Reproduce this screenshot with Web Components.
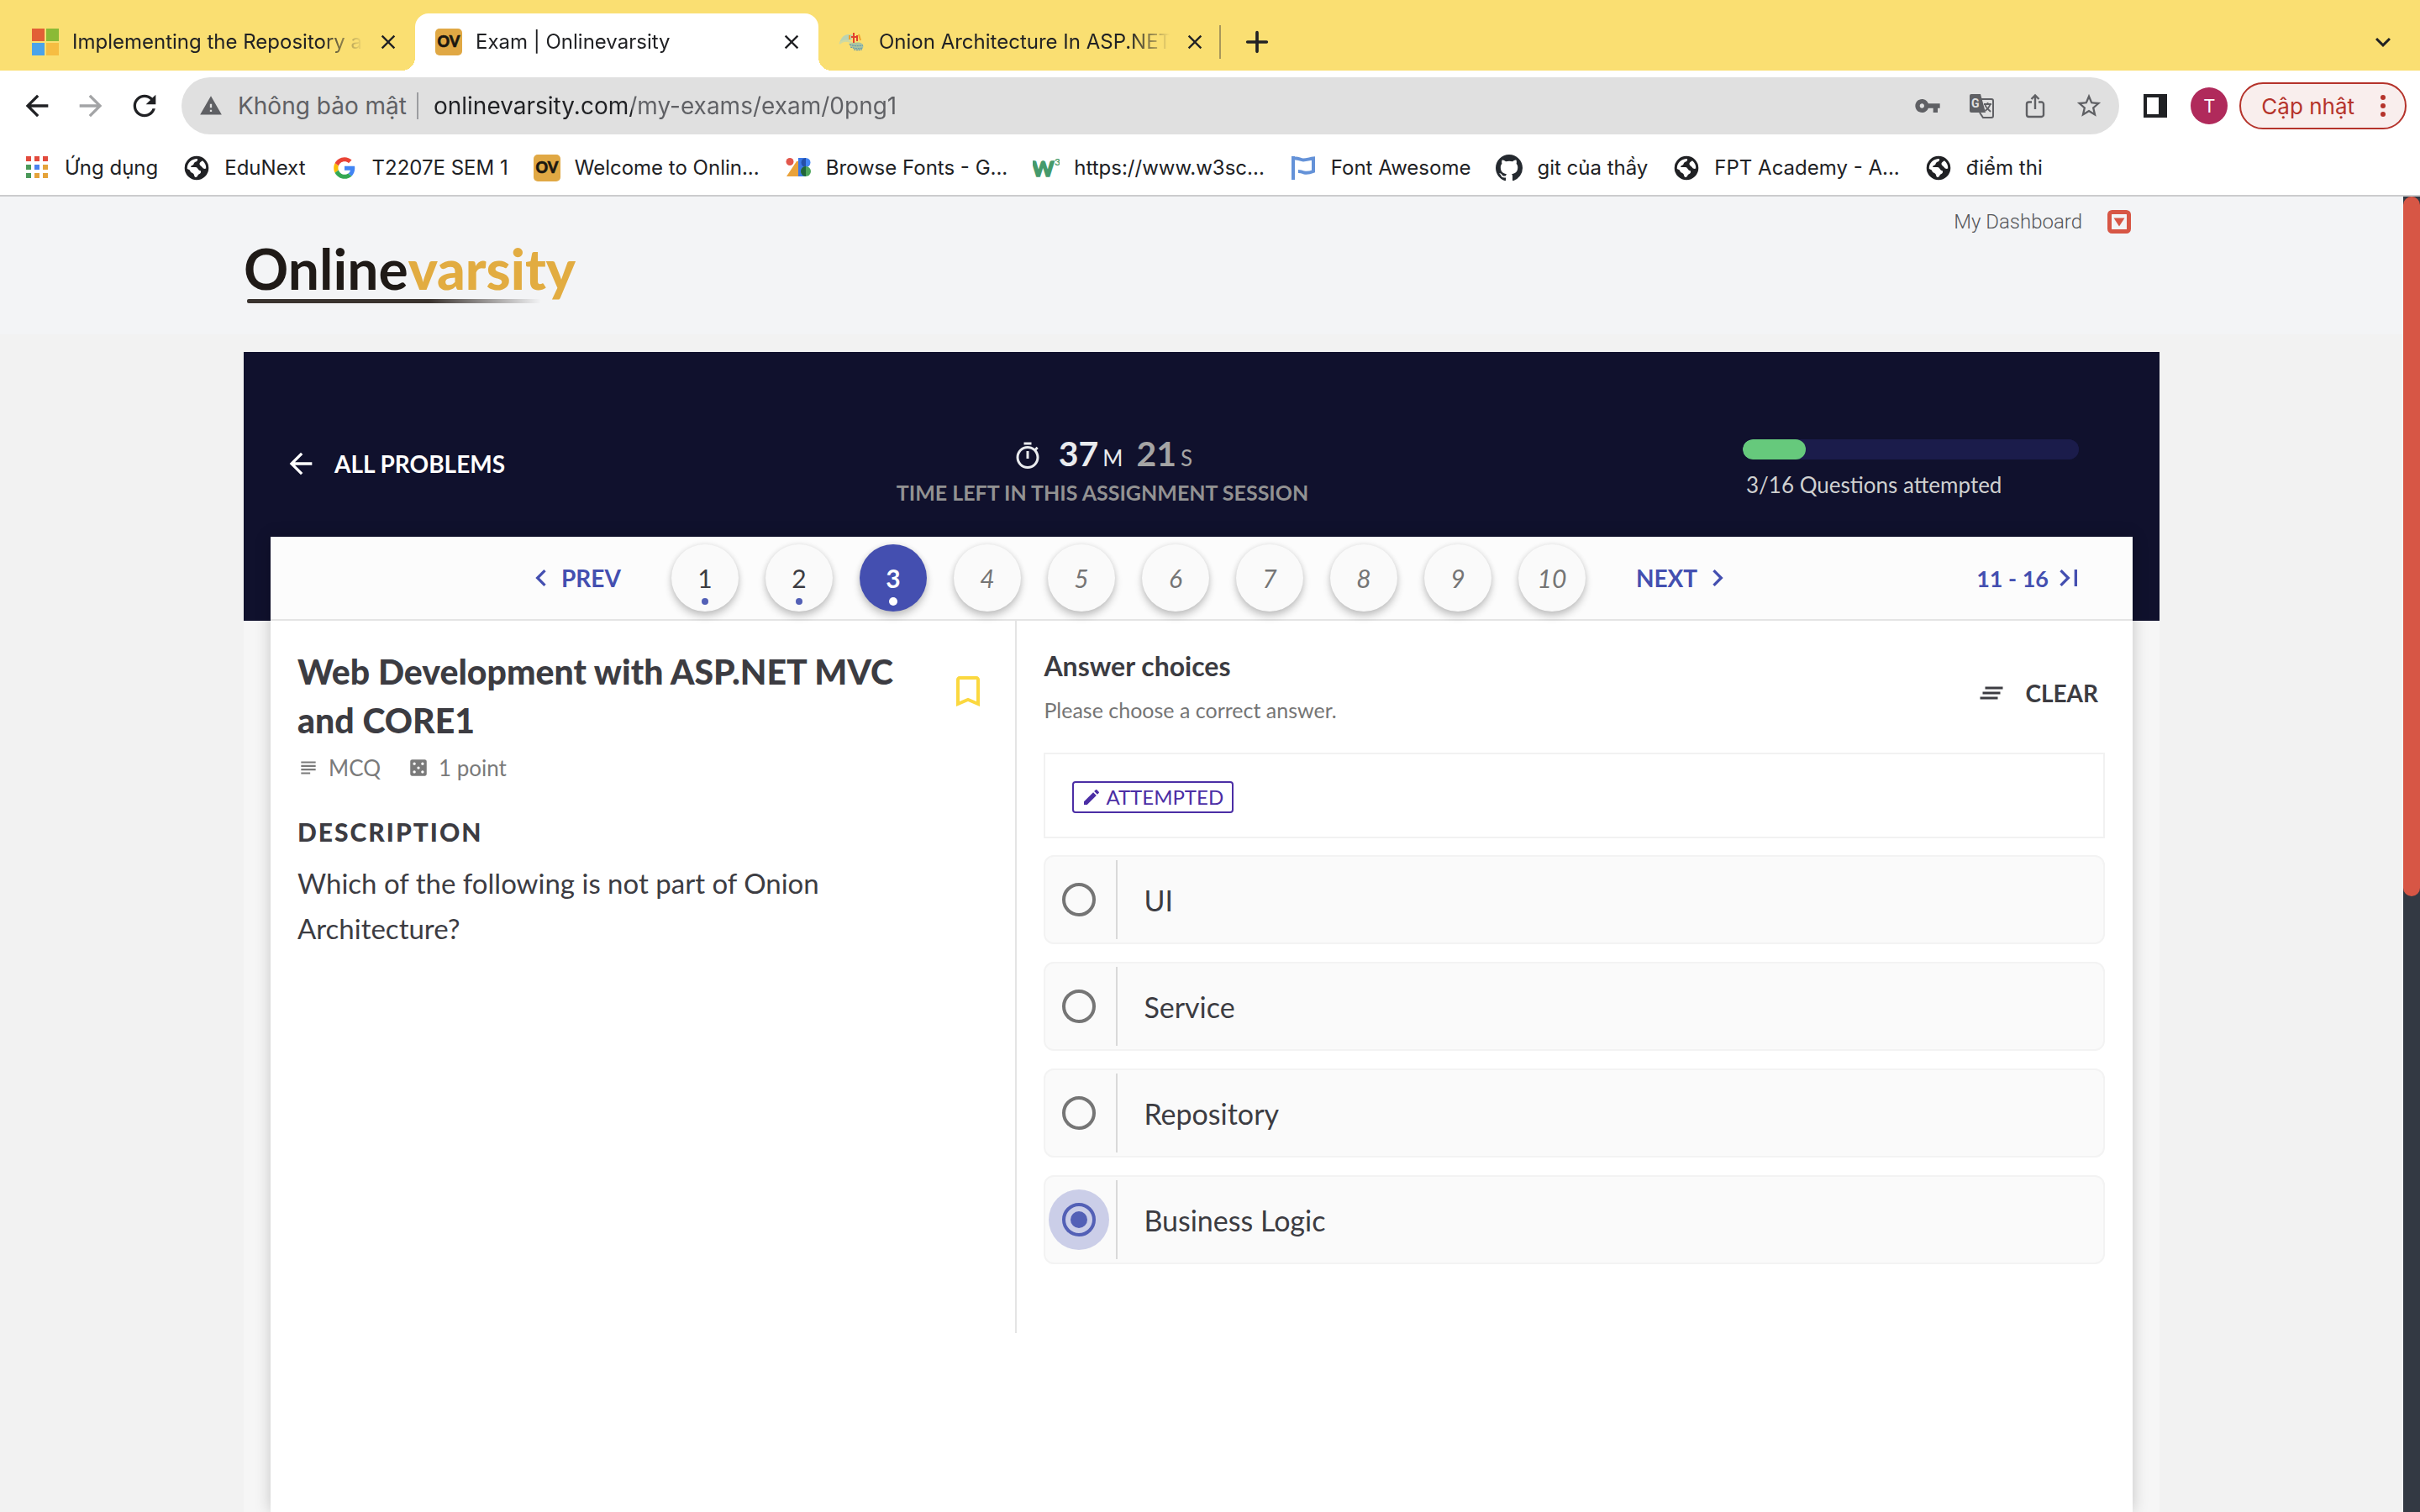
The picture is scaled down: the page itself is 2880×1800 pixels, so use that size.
<!DOCTYPE html>
<html lang="vi">
<head>
<meta charset="utf-8">
<title>Exam | Onlinevarsity</title>
<style>
  html, body { margin: 0; height: 100%; }
  body { font-family: Lato, "Open Sans", sans-serif; color: #3c3c42; background: #f2f2f2; overflow: hidden; }
</style>
</head>
<body>
<app-window></app-window>

<script>
const ICONS = {
  back: ['0 0 24 24', '<path d="M20 11H7.83l5.59-5.59L12 4l-8 8 8 8 1.41-1.41L7.83 13H20v-2z"/>'],
  forward: ['0 0 24 24', '<path d="M4 11h12.17l-5.59-5.59L12 4l8 8-8 8-1.41-1.41L16.17 13H4v-2z"/>'],
  reload: ['0 0 24 24', '<path d="M17.65 6.35C16.2 4.9 14.21 4 12 4c-4.42 0-7.99 3.58-7.99 8s3.57 8 7.99 8c3.73 0 6.84-2.55 7.73-6h-2.08c-.82 2.33-3.04 4-5.65 4-3.31 0-6-2.69-6-6s2.69-6 6-6c1.66 0 3.14.69 4.22 1.78L13 11h7V4l-2.35 2.35z"/>'],
  warning: ['0 0 24 24', '<path d="M1 21h22L12 2 1 21zm12-3h-2v-2h2v2zm0-4h-2v-4h2v4z"/>'],
  key: ['0 0 24 24', '<path d="M12.65 10C11.83 7.67 9.61 6 7 6c-3.31 0-6 2.69-6 6s2.69 6 6 6c2.61 0 4.83-1.67 5.65-4H17v4h4v-4h2v-4H12.65zM7 14c-1.1 0-2-.9-2-2s.9-2 2-2 2 .9 2 2-.9 2-2 2z"/>'],
  star: ['0 0 24 24', '<path d="M22 9.24l-7.19-.62L12 2 9.19 8.63 2 9.24l5.46 4.73L5.82 21 12 17.27 18.18 21l-1.63-7.03L22 9.24zM12 15.4l-3.76 2.27 1-4.28-3.32-2.88 4.38-.38L12 6.1l1.71 4.04 4.38.38-3.32 2.88 1 4.28L12 15.4z"/>'],
  share: ['0 0 32 32', '<path d="M12 11.500H8.500A2.500 2.500 0 0 0 6 14v12.500A2.500 2.500 0 0 0 8.500 29h15a2.500 2.500 0 0 0 2.500-2.500V14a2.500 2.500 0 0 0-2.500-2.500H20M16 20V4M11.500 8L16 3.500 20.500 8" fill="none" stroke="currentColor" stroke-width="2.400"/>'],
  translate: ['0 0 32 32', '<path d="M14 8h14a2 2 0 0 1 2 2v18a2 2 0 0 1-2 2H18l-4-6" fill="none" stroke="currentColor" stroke-width="2"/><path d="M4 2h11l6 22H4a2 2 0 0 1-2-2V4a2 2 0 0 1 2-2z"/><path d="M19 14h9M23.500 12v2M26.500 14c-1 4-3.500 6-6 8M20.500 15c1 3 3.500 5 6.500 8" fill="none" stroke="currentColor" stroke-width="1.800"/><text x="4" y="18" font-family="Roboto" font-weight="700" font-size="14" fill="#e0e0e0">G</text>'],
  panel: ['0 0 28 28', '<path fill-rule="evenodd" d="M0 0h28v28H0zM4 4v20h14V4z"/>'],
  close: ['0 0 24 24', '<path d="M19 6.41L17.59 5 12 10.59 6.41 5 5 6.41 10.59 12 5 17.59 6.41 19 12 13.41 17.59 19 19 17.59 13.41 12z"/>'],
  plus: ['0 0 24 24', '<path d="M12 5.200v13.600M5.200 12h13.600" fill="none" stroke="currentColor" stroke-width="2.200" stroke-linecap="round"/>'],
  expand: ['0 0 24 24', '<path d="M16.59 8.59L12 13.17 7.41 8.59 6 10l6 6 6-6z"/>'],
  dots: ['0 0 8 32', '<circle cx="4" cy="6" r="3"/><circle cx="4" cy="16" r="3"/><circle cx="4" cy="26" r="3"/>'],
  timer: ['0 0 24 24', '<path d="M15 1H9v2h6V1zm-4 13h2V8h-2v6zm8.03-6.61l1.42-1.42c-.43-.51-.9-.99-1.41-1.41l-1.42 1.42C16.07 4.74 14.12 4 12 4c-4.97 0-9 4.03-9 9s4.02 9 9 9 9-4.03 9-9c0-2.12-.74-4.07-1.97-5.61zM12 20c-3.87 0-7-3.13-7-7s3.13-7 7-7 7 3.13 7 7-3.13 7-7 7z"/>'],
  bookmark: ['0 0 24 24', '<path d="M17 3H7c-1.1 0-1.99.9-1.99 2L5 21l7-3 7 3V5c0-1.1-.9-2-2-2zm0 15l-5-2.180L7 18V5h10v13z"/>'],
  dice: ['0 0 24 24', '<path d="M19 3H5c-1.1 0-2 .9-2 2v14c0 1.1.9 2 2 2h14c1.1 0 2-.9 2-2V5c0-1.1-.9-2-2-2zM7.500 18c-.83 0-1.500-.67-1.500-1.500S6.670 15 7.500 15s1.500.67 1.500 1.500S8.330 18 7.500 18zm0-9C6.670 9 6 8.330 6 7.500S6.670 6 7.500 6 9 6.670 9 7.500 8.330 9 7.500 9zm4.500 4.500c-.83 0-1.500-.67-1.500-1.500s.67-1.500 1.500-1.500 1.500.67 1.500 1.500-.67 1.500-1.500 1.500zm4.500 4.500c-.83 0-1.500-.67-1.500-1.500s.67-1.500 1.500-1.500 1.500.67 1.500 1.500-.67 1.500-1.500 1.500zm0-9c-.83 0-1.500-.67-1.500-1.500S15.670 6 16.500 6s1.500.67 1.500 1.500S17.330 9 16.500 9z"/>'],
  lines: ['0 0 24 24', '<path d="M14 17H4v2h10v-2zm6-8H4v2h16V9zM4 15h16v-2H4v2zM4 5v2h16V5H4z"/>'],
  pencil: ['0 0 24 24', '<path d="M3 17.250V21h3.750L17.810 9.940l-3.750-3.750L3 17.250zM20.710 7.040c.39-.39.39-1.020 0-1.410l-2.340-2.340c-.39-.39-1.020-.39-1.410 0l-1.830 1.830 3.750 3.750 1.830-1.830z"/>'],
  clear: ['0 0 24 24', '<path d="M5 13h14v-2H5v2zm-2 4h14v-2H3v2zM7 7v2h14V7H7z"/>'],
  prev: ['0 0 24 24', '<path d="M15.410 7.410L14 6l-6 6 6 6 1.410-1.410L10.830 12z"/>'],
  next: ['0 0 24 24', '<path d="M10 6L8.590 7.410 13.170 12l-4.580 4.590L10 18l6-6z"/>'],
  last: ['0 0 24 24', '<path d="M5.590 7.410L10.180 12l-4.590 4.590L7 18l6-6-6-6zM16 6h2v12h-2z"/>'],
  dropdown: ['0 0 28 28', '<rect x="2.500" y="2.500" width="23" height="23" rx="3" fill="#f3f4f6" stroke="#d75645" stroke-width="5"/><path d="M7.500 9.500h13L14 19.500z" fill="#d75645"/>'],
  microsoft: ['0 0 32 32', '<path fill="#e25f36" d="M0 0h15v15H0z"/><path fill="#8bba36" d="M17 0h15v15H17z"/><path fill="#4ba3ea" d="M0 17h15v15H0z"/><path fill="#f6bd42" d="M17 17h15v15H17z"/>'],
  ov: ['0 0 32 32', '<rect width="32" height="32" rx="5" fill="#e0a844"/><text x="16" y="22" text-anchor="middle" font-family="Lato" font-weight="900" font-size="18" fill="#1b1710" stroke="#1b1710" stroke-width=".6">OV</text>'],
  onion: ['0 0 32 32', '<path d="M1 17C4 8 9 5 17 8l-2 6c-5-1-9 0-14 3z" fill="#b9d3b4"/><path d="M1 18c5-5 10-4 15-1" fill="none" stroke="#cfd9a0" stroke-width="2"/><path d="M12 18c6-1 12-3 16 0 3 3 1 7-3 8-6 0-10-3-13-8z" fill="#a9c3a0"/><path d="M13 19c5 2 10 2 16 1M14 22c5 2 10 2 15 1M18 25c3 1 6 1 10 0" fill="none" stroke="#5b93b3" stroke-dasharray="2 1"/><path d="M18 5v12M15 10h6M22 8v7" stroke="#e2412e" stroke-width="2"/><path d="M13 8v5M24 7l2 7" stroke="#f0a22c" stroke-width="2"/>'],
  apps: ['0 0 32 32', '<path fill="#e24b3d" d="M3 2h6v6H3zM13 2h6v6h-6zM23 2h6v6h-6z"/><path fill="#4a9959" d="M3 12h6v6H3zM3 22h6v6H3z"/><path fill="#4a82ee" d="M13 12h6v6h-6z"/><path fill="#e5a33a" d="M23 12h6v6h-6zM13 22h6v6h-6zM23 22h6v6h-6z"/>'],
  globe: ['0 0 32 32', '<circle cx="16" cy="16" r="14.300" fill="#202124"/><path fill="#fff" d="M4.800 17C4.500 10 9.500 5 17 4.900c.5 2-.5 3.100-2.500 3.800-2 .8-1.500 2.800-3 3.800-1.500.9-2.500 1-2.300 2.500h5.300c2.500 0 2.800 2.200 4 3.300 1.500 1.200 3 .7 2.500 3-.4 1.700-2.500 1.700-3.300 3-.8 1.200-.7 2.400-2.700 2.800-2-.2-1.500-2.600-2.700-4.100-1.300-1.500-3.500-1.500-4-3.500-.3-1.500-2-1.500-3.500-2.500z"/><path fill="#fff" d="M19.500 10.500c.5-1.500 2-2 3.500-3.200 3 2.500 4.500 5.500 4.200 9.200-1.500.8-3.200.5-4.200-1-.7-1.300-3.800-2.500-3.500-5z"/>'],
  google: ['-6 -6 60 60', '<path fill="#EA4335" d="M24 9.500c3.540 0 6.710 1.220 9.210 3.600l6.850-6.850C35.900 2.380 30.470 0 24 0 14.620 0 6.510 5.380 2.560 13.220l7.980 6.190C12.430 13.720 17.740 9.500 24 9.500z"/><path fill="#4285F4" d="M46.980 24.550c0-1.570-.15-3.090-.38-4.550H24v9.020h12.940c-.58 2.960-2.260 5.480-4.780 7.180l7.730 6c4.510-4.180 7.090-10.360 7.090-17.650z"/><path fill="#FBBC05" d="M10.530 28.590c-.48-1.450-.76-2.990-.76-4.590s.27-3.140.76-4.590l-7.980-6.190C.92 16.460 0 20.120 0 24c0 3.880.92 7.540 2.560 10.780l7.970-6.190z"/><path fill="#34A853" d="M24 48c6.480 0 11.930-2.130 15.890-5.810l-7.730-6c-2.150 1.450-4.920 2.300-8.160 2.300-6.260 0-11.570-4.220-13.470-9.910l-7.980 6.190C6.510 42.620 14.620 48 24 48z"/>'],
  fonts: ['0 0 32 32', '<path fill="#e9a23b" d="M14 8h3v18H2z"/><path fill="#3b78e7" d="M16 4h9v22h-9z"/><circle cx="6" cy="8.500" r="4.500" fill="#e2574c"/><circle cx="25" cy="9.500" r="5.500" fill="#4285f4"/><path d="M25 4v11a5.500 5.500 0 0 1 0-11z" fill="#254fa8"/><circle cx="25" cy="20" r="6" fill="#4ea65b"/><path d="M25 14v12a6 6 0 0 1 0-12z" fill="#21643a"/>'],
  w3: ['0 0 32 32', '<text x="-1" y="26" font-family="Lato" font-weight="900" font-size="25" fill="#459a6b" stroke="#459a6b" stroke-width="1.500">W</text><text x="26" y="13" font-family="Lato" font-weight="700" font-size="12" fill="#459a6b">3</text>'],
  flag: ['0 0 32 32', '<path d="M4 30V2M4 5c5-2 8 1.500 12 1.500S24 5 28 4.500V20c-5 2-7 2.500-11 1.500-3-1.200-5-1.500-7-1.500" fill="none" stroke="#6492d8" stroke-width="4"/>'],
  github: ['0 0 16 16', '<path fill="#24292f" d="M8 0C3.580 0 0 3.580 0 8c0 3.540 2.290 6.530 5.470 7.590.4.07.55-.17.55-.38 0-.19-.01-.82-.01-1.490-2.010.37-2.530-.49-2.690-.94-.09-.23-.48-.94-.82-1.130-.28-.15-.68-.52-.01-.53.63-.01 1.080.58 1.230.82.72 1.210 1.870.87 2.330.66.07-.52.28-.87.51-1.070-1.780-.2-3.640-.89-3.640-3.950 0-.87.31-1.590.82-2.150-.08-.2-.36-1.020.08-2.120 0 0 .67-.21 2.200.82.64-.18 1.320-.27 2-.27s1.360.09 2 .27c1.530-1.040 2.200-.82 2.200-.82.44 1.100.16 1.920.08 2.120.51.56.82 1.270.82 2.150 0 3.070-1.870 3.750-3.650 3.950.29.25.54.73.54 1.480 0 1.070-.01 1.930-.01 2.200 0 .21.15.46.55.38A8.010 8.010 0 0 0 16 8c0-4.420-3.580-8-8-8z"/>']
};

class Base extends HTMLElement {
  connectedCallback() {
    if (this.shadowRoot) return;
    this.attachShadow({ mode: 'open' }).innerHTML =
      `<style>*{box-sizing:border-box}a{color:inherit;text-decoration:none}button{font:inherit;color:inherit;background:none;border:0;padding:0;margin:0}h1,h2,h3,p{margin:0}${this.css()}</style>${this.html()}`;
  }
}

customElements.define('ui-icon', class extends Base {
  css() { const s = this.getAttribute('size') || 32; return `:host{display:block;flex:none;width:${s}px;height:${s}px}svg{display:block;width:100%;height:100%;fill:currentColor}`; }
  html() { const [box, art] = ICONS[this.getAttribute('name')]; return `<svg viewBox="${box}" aria-hidden="true">${art}</svg>`; }
});

customElements.define('browser-tab', class extends Base {
  css() { return `
    :host{display:flex;align-items:center;width:480px;height:68px;padding:0 18px 0 24px;position:relative;color:#202124}
    :host([active]){background:#fff;border-radius:16px 16px 0 0}
    :host([active])::before,:host([active])::after{content:"";position:absolute;bottom:0;width:16px;height:16px}
    :host([active])::before{right:100%;background:radial-gradient(circle at 0 0,transparent 16px,#fff 16px)}
    :host([active])::after{left:100%;background:radial-gradient(circle at 100% 0,transparent 16px,#fff 16px)}
    .t{flex:1;min-width:0;margin:0 16px;white-space:nowrap;overflow:hidden;line-height:32px;-webkit-mask-image:linear-gradient(90deg,#000 calc(100% - 48px),transparent);mask-image:linear-gradient(90deg,#000 calc(100% - 48px),transparent)}`; }
  html() { return `<ui-icon name="${this.getAttribute('icon')}"></ui-icon><span class="t"><slot></slot></span><button aria-label="Close tab"><ui-icon name="close" size="28"></ui-icon></button>`; }
});

customElements.define('tab-strip', class extends Base {
  css() { return `
    :host{display:flex;align-items:center;height:84px;padding:16px 26px 0 14px;background:#fadf72;font-size:24px;color:#202124}
    .sep{width:2px;height:40px;background:#a8975a;margin:0 23px 0 -3px}
    .end{margin-left:auto}`; }
  html() { return `
    <browser-tab icon="microsoft">Implementing the Repository an</browser-tab>
    <browser-tab icon="ov" active>Exam | Onlinevarsity</browser-tab>
    <browser-tab icon="onion">Onion Architecture In ASP.NET</browser-tab>
    <span class="sep"></span>
    <button aria-label="New tab"><ui-icon name="plus" size="40"></ui-icon></button>
    <button class="end" aria-label="Search tabs"><ui-icon name="expand" size="36"></ui-icon></button>`; }
});

customElements.define('address-bar', class extends Base {
  css() { return `
    :host{display:flex;align-items:center;height:84px;padding:0 16px 0 24px;gap:24px;background:#fff;color:#202124}
    .off{color:#a3a4a6}
    .box{flex:1;display:flex;align-items:center;height:68px;border-radius:34px;background:#e0e0e0;padding:0 16px 0 21px;color:#5f6064;font-size:28px;line-height:36px}
    .safe{margin:0 12px 0 18px;white-space:nowrap}
    .bar{width:2px;height:32px;background:#9c9da0}
    input{flex:1;min-width:0;border:0;outline:0;padding:0;margin:0 24px 0 18px;font:inherit;height:40px;color:transparent;background:linear-gradient(90deg,#202124 236px,#5f6064 236px);-webkit-background-clip:text;background-clip:text}
    .tools{display:flex;gap:24px}
    .tools button{width:40px;height:40px;display:grid;place-items:center}
    .right{display:flex;align-items:center;gap:28px;margin-left:5px}
    .me{width:44px;height:44px;border-radius:50%;background:#b02a5b;color:#fff;font-size:22px}
    .up{display:flex;align-items:center;gap:30px;height:56px;margin-left:-14px;padding:0 22px 0 24px;border:2px solid #b5332b;border-radius:28px;background:#f9eeed;color:#b5332b;font-size:26px;white-space:nowrap}
    .up svg{width:8px;height:32px;fill:currentColor}`; }
  html() { return `
    <button aria-label="Back"><ui-icon name="back" size="40"></ui-icon></button>
    <button class="off" aria-label="Forward"><ui-icon name="forward" size="40"></ui-icon></button>
    <button aria-label="Reload"><ui-icon name="reload" size="40"></ui-icon></button>
    <div class="box"><ui-icon name="warning" size="28"></ui-icon><span class="safe">Không bảo mật</span><span class="bar"></span>
      <input aria-label="Address" value="onlinevarsity.com/my-exams/exam/0png1">
      <div class="tools"><button aria-label="Passwords"><ui-icon name="key" size="32"></ui-icon></button><button aria-label="Translate"><ui-icon name="translate" size="32"></ui-icon></button><button aria-label="Share"><ui-icon name="share" size="32"></ui-icon></button><button aria-label="Bookmark"><ui-icon name="star" size="34"></ui-icon></button></div>
    </div>
    <div class="right"><button aria-label="Side panel"><ui-icon name="panel" size="28"></ui-icon></button><button class="me">T</button>
      <button class="up">Cập nhật<svg viewBox="0 0 8 32" aria-hidden="true">${ICONS.dots[1]}</svg></button></div>`; }
});

customElements.define('bookmark-link', class extends Base {
  css() { return `:host{display:block}a{display:flex;align-items:center;gap:17px;white-space:nowrap;line-height:32px}`; }
  html() { return `<a href="#"><ui-icon name="${this.getAttribute('icon')}"></ui-icon><slot></slot></a>`; }
});

customElements.define('bookmarks-bar', class extends Base {
  css() { return `:host{display:flex;align-items:center;gap:30px;height:66px;padding:0 28px;background:#fff;border-bottom:2px solid #cbcbcd;color:#202124;font-size:24px}`; }
  html() { return [['apps', 'Ứng dụng'], ['globe', 'EduNext'], ['google', 'T2207E SEM 1'], ['ov', 'Welcome to Onlin...'], ['fonts', 'Browse Fonts - G...'], ['w3', 'https://www.w3sc...'], ['flag', 'Font Awesome'], ['github', 'git của thầy'], ['globe', 'FPT Academy - A...'], ['globe', 'điểm thi']]
    .map(([i, t]) => `<bookmark-link icon="${i}">${t}</bookmark-link>`).join(''); }
});

customElements.define('site-header', class extends Base {
  css() { return `
    :host{display:block;background:#f3f4f6}
    .in{display:flex;justify-content:space-between;align-items:flex-start;width:2280px;max-width:100%;height:164px;margin:0 auto}
    .logo{display:block;padding-top:56px;font-weight:700;font-size:66px;line-height:60px;color:#1f1a17}
    .logo b{color:#e2ac41}
    .logo i{display:block;height:5px;width:350px;margin:6px 0 0 4px;border-radius:2px;background:linear-gradient(90deg,#3a332f 62%,transparent)}
    nav{display:flex;align-items:center;gap:30px;padding:14px 34px 0 0;font:300 24px/32px Roboto,sans-serif;color:#55565a}`; }
  html() { return `<div class="in"><a class="logo" href="#">Online<b>varsity</b><i></i></a><nav><a href="#">My Dashboard</a><button aria-label="Open menu"><ui-icon name="dropdown" size="28"></ui-icon></button></nav></div>`; }
});

customElements.define('exam-status', class extends Base {
  css() { return `
    :host{display:grid;grid-template-columns:264px 1fr 400px;align-items:start;height:220px;padding:96px 64px 0 16px;color:#fff}
    .all{display:flex;align-items:center;gap:20px;height:74px;font-size:28px;font-weight:700;white-space:nowrap}
    .mid{display:flex;flex-direction:column;align-items:center;gap:1px;margin-right:52px}
    .time{display:flex;align-items:baseline;line-height:50px;font-size:26px;color:#e9ebee}
    .time ui-icon{align-self:center;margin-right:19px}
    .time b{font-size:41px;margin-right:5px}
    .time .m{margin-right:16px}
    .time .s{color:#a5a5a5}
    .cap{font-size:25px;line-height:30px;font-weight:700;color:#929292;white-space:nowrap}
    progress{display:block;appearance:none;width:100%;height:24px;margin:8px 0 14px;border:0;border-radius:12px;overflow:hidden;background:#1b1c4b}
    progress::-webkit-progress-bar{background:#1b1c4b;border-radius:12px}
    progress::-webkit-progress-value{background:#66c97c;border-radius:12px}
    label{display:block;padding-left:4px;font-size:26px;line-height:32px;color:#cfd0d0}`; }
  html() { return `
    <a class="all" href="#"><ui-icon name="back" size="40"></ui-icon>ALL PROBLEMS</a>
    <div class="mid"><div class="time"><ui-icon name="timer" size="36"></ui-icon><b>37</b><span class="m">M</span><b class="s">21</b><span class="s">S</span></div><div class="cap">TIME LEFT IN THIS ASSIGNMENT SESSION</div></div>
    <div><progress id="p" value="3" max="16"></progress><label for="p">3/16 Questions attempted</label></div>`; }
});

customElements.define('question-dot', class extends Base {
  css() { return `
    :host{display:block}
    button{position:relative;display:grid;place-items:center;width:80px;height:80px;border-radius:50%;background:#fafafa;box-shadow:0 6px 10px rgba(0,0,0,.2),0 0 6px rgba(0,0,0,.1);font-size:30px;font-style:italic;color:#757575}
    :host([done]) button{font-style:normal;color:#3c3c42}
    :host([current]) button{background:#444fb0;color:#fff;font-weight:700}
    :host([done]) button::after{content:"";position:absolute;bottom:8px;left:36px;width:8px;height:8px;border-radius:50%;background:#5360b6}
    :host([current]) button::after{background:#fff;width:10px;height:10px;left:35px;bottom:7px}`; }
  html() { return `<button><slot></slot></button>`; }
});

customElements.define('question-nav', class extends Base {
  css() { return `
    :host{display:flex;align-items:center;height:100px;padding:0 56px 0 14px;background:#fcfcfc;border-bottom:2px solid #e4e4e4;color:#444fb0;font-size:28px;font-weight:700}
    .mid{flex:1;display:flex;align-items:center;justify-content:center;gap:60px}
    .dots{display:flex;gap:32px;font-weight:400}
    button{display:flex;align-items:center;gap:4px;white-space:nowrap}
    .more{font-size:27px}`; }
  html() { return `
    <div class="mid"><button><ui-icon name="prev" size="40"></ui-icon>PREV</button>
    <div class="dots">${Array.from({ length: 10 }, (_, i) => `<question-dot${i < 3 ? ' done' : ''}${i === 2 ? ' current' : ''}>${i + 1}</question-dot>`).join('')}</div>
    <button>NEXT<ui-icon name="next" size="40"></ui-icon></button></div>
    <button class="more">11 - 16<ui-icon name="last" size="40"></ui-icon></button>`; }
});

customElements.define('question-text', class extends Base {
  css() { return `
    :host{display:block;width:40%;padding:32px 32px 0 32px}
    .top{display:flex;justify-content:space-between;align-items:flex-start}
    h1{font-size:41px;line-height:58px;font-weight:900;max-width:740px}
    .top button{color:#fbd83f;padding-top:28px}
    .meta{display:flex;align-items:center;margin-top:12px;font-size:26px;line-height:30px;color:#7a7a7a}
    .meta span{margin:0 32px 0 11px}
    h2{margin-top:43px;font-size:30px;line-height:36px;font-weight:900;letter-spacing:2px}
    p{margin-top:16px;font-size:33px;line-height:54px;max-width:740px}`; }
  html() { return `
    <div class="top"><h1>Web Development with ASP.NET MVC and CORE1</h1><button aria-label="Bookmark question"><ui-icon name="bookmark" size="48"></ui-icon></button></div>
    <div class="meta"><ui-icon name="lines" size="26"></ui-icon><span>MCQ</span><ui-icon name="dice" size="26"></ui-icon><span>1 point</span></div>
    <h2>DESCRIPTION</h2><p>Which of the following is not part of Onion Architecture?</p>`; }
});

customElements.define('answer-option', class extends Base {
  css() { return `
    :host{display:block}
    label{display:flex;align-items:stretch;height:106px;padding:4px 0;border:2px solid #f3f3f3;border-radius:12px;background:#fafafa;font-size:34px}
    .pick{display:grid;place-items:center;width:86px;padding-right:4px;border-right:2px solid #d9d9d9}
    .halo{display:grid;place-items:center;width:72px;height:72px;border-radius:50%}
    :host([checked]) .halo{background:#cbcee8}
    input{appearance:none;width:40px;height:40px;margin:0;border:4px solid #757575;border-radius:50%;display:grid;place-items:center}
    input:checked{border-color:#5360b6}
    input:checked::before{content:"";width:20px;height:20px;border-radius:50%;background:#5360b6}
    .t{align-self:center;padding-left:31px}`; }
  html() { return `<label><span class="pick"><span class="halo"><input type="radio" name="answer"${this.hasAttribute('checked') ? ' checked' : ''}></span></span><span class="t"><slot></slot></span></label>`; }
});

customElements.define('answer-panel', class extends Base {
  css() { return `
    :host{display:block;flex:1;padding:35px 33px 0 32px;border-left:2px solid #e4e4e4}
    .top{display:flex;justify-content:space-between;align-items:flex-end}
    h2{font-size:32px;line-height:38px;font-weight:700}
    p{margin-top:18px;font-size:25px;line-height:30px;color:#757575}
    .clear{display:flex;align-items:center;gap:22px;height:70px;padding-right:8px;font-size:28px;font-weight:700}
    .state{height:102px;margin:36px 0 20px;padding:3px 32px 0;border:2px solid #f2f2f2;display:flex;align-items:center}
    .tag{display:flex;align-items:center;gap:5px;padding:0 10px 0 9px;border:2px solid #4b2ea5;border-radius:4px;color:#4b2ea5;font-size:24px;line-height:34px}
    .list{display:grid;gap:21px}`; }
  html() { return `
    <div class="top"><div><h2>Answer choices</h2><p>Please choose a correct answer.</p></div><button class="clear"><ui-icon name="clear" size="36"></ui-icon>CLEAR</button></div>
    <div class="state"><span class="tag"><ui-icon name="pencil" size="24"></ui-icon>ATTEMPTED</span></div>
    <div class="list" role="radiogroup" aria-label="Answer choices"><answer-option>UI</answer-option><answer-option>Service</answer-option><answer-option>Repository</answer-option><answer-option checked>Business Logic</answer-option></div>`; }
});

customElements.define('exam-page', class extends Base {
  css() { return `
    :host{display:flex;flex-direction:column;width:2280px;max-width:100%;margin:21px auto 0;padding:0 32px;flex:1;background:linear-gradient(#10112d 320px,#f6f6f6 320px)}
    .card{flex:1;background:#fff;box-shadow:0 0 18px rgba(0,0,0,.2)}
    .cols{display:flex;min-height:848px}`; }
  html() { return `<exam-status></exam-status><main class="card"><question-nav></question-nav><div class="cols"><question-text></question-text><answer-panel></answer-panel></div></main>`; }
});

customElements.define('app-window', class extends Base {
  css() { return `
    :host{display:flex;flex-direction:column;height:100vh}
    .chrome{font-family:Inter,Roboto,sans-serif}
    .view{flex:1;min-height:0;display:flex}
    .page{flex:1;display:flex;flex-direction:column;overflow:hidden}
    .scroll{display:flex;flex-direction:column;width:20px;background:#333943}
    .thumb{flex:0 0 53.2%;border-radius:10px;background:#d75645}`; }
  html() { return `
    <div class="chrome"><tab-strip></tab-strip><address-bar></address-bar><bookmarks-bar></bookmarks-bar></div>
    <div class="view"><div class="page"><site-header></site-header><exam-page></exam-page></div><div class="scroll"><div class="thumb"></div></div></div>`; }
});
</script>
</body>
</html>
